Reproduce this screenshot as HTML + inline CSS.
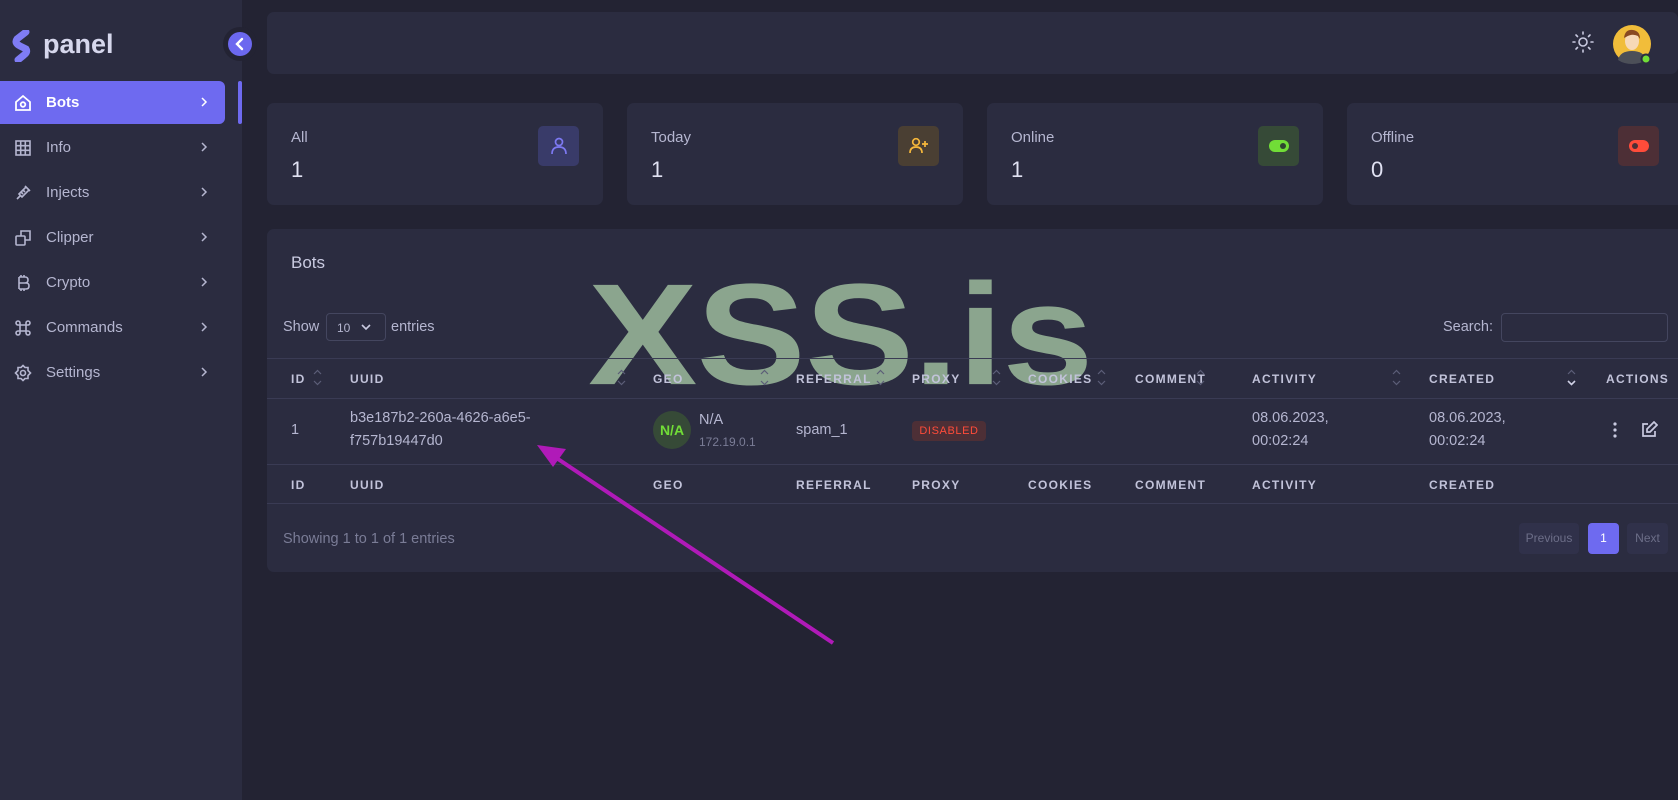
<!DOCTYPE html>
<html><head><meta charset="utf-8"><style>
*{box-sizing:border-box;margin:0;padding:0}
body{width:1678px;height:800px;overflow:hidden;background:#232333;font-family:"Liberation Sans",sans-serif;color:#cfd0e6;position:relative}
.abs{position:absolute}
.side{left:0;top:0;width:242px;height:800px;background:#2b2c40}
.logo{left:43px;top:29px;font-size:27px;font-weight:bold;color:#d6d7ec}
.tog{left:228px;top:32px;width:24px;height:24px;border-radius:50%;background:#6c68ef;box-shadow:0 0 0 5px #232333}
.menu{left:0;width:225px;height:43px;display:flex;align-items:center;font-size:15px;color:#b5b6d0}
.menu svg{margin-left:14px;margin-right:14px}
.menu .ch{position:absolute;right:0;top:14px}
.active{background:#6e6af0;color:#fff;border-radius:0 6px 6px 0}
.card{background:#2b2c40;border-radius:7px}
.lab{font-size:15px;color:#b5b6d0}
.num{font-size:22px;color:#e0e1f2}
.ib{width:41px;height:40px;border-radius:5px;display:flex;align-items:center;justify-content:center}
.th{font-size:12px;letter-spacing:1.3px;font-weight:bold;color:#c2c3da;position:absolute}
.td{font-size:14.5px;color:#b5b6d0;position:absolute;line-height:23px}
.line{position:absolute;left:267px;width:1411px;height:1px;background:#3a3b54}
.srt{position:absolute}
</style></head><body>
<div class="abs side"></div>
<svg class="abs" style="left:12px;top:30px" width="22" height="32" viewBox="0 0 22 32"><path d="M14 2 L5 9 Q2 13 8 16 L14 19 Q16 22 12 25 L6 30" stroke="#7f7cf5" stroke-width="7" fill="none" stroke-linecap="round"/></svg>
<div class="abs logo">panel</div>
<div class="abs tog"><svg width="24" height="24"><path d="M14 7 L9 12 L14 17" stroke="#fff" stroke-width="2.4" fill="none" stroke-linecap="round"/></svg></div>
<div class="abs" style="left:238px;top:81px;width:4px;height:43px;background:#6e6af0;border-radius:2px"></div>

<div class="abs menu active" style="top:81px"><svg width="18" height="18" viewBox="0 0 18 18" fill="none" stroke="#fff" stroke-width="1.8"><path d="M2 8 L9 2 L16 8 V16 H2 Z"/><circle cx="9" cy="10.5" r="2.3"/></svg><b>Bots</b><svg class="ch" width="14" height="14"><path d="M5 3 L9 7 L5 11" stroke="#fff" stroke-width="1.5" fill="none"/></svg></div>
<div class="abs menu" style="top:126px"><svg width="18" height="18" fill="none" stroke="#b5b6d0" stroke-width="1.6"><rect x="2" y="2" width="14" height="14"/><path d="M2 6.7H16M2 11.3H16M6.7 2V16M11.3 2V16"/></svg>Info<svg class="ch" width="14" height="14"><path d="M5 3 L9 7 L5 11" stroke="#b5b6d0" stroke-width="1.5" fill="none"/></svg></div>
<div class="abs menu" style="top:171px"><svg width="18" height="18" fill="none" stroke="#b5b6d0" stroke-width="1.6"><path d="M3 15 L6 12 M5 10 L12 3 L15 6 L8 13 Z M11 2 L16 7 M7 8 L9 10 M9 6 L11 8"/></svg>Injects<svg class="ch" width="14" height="14"><path d="M5 3 L9 7 L5 11" stroke="#b5b6d0" stroke-width="1.5" fill="none"/></svg></div>
<div class="abs menu" style="top:216px"><svg width="18" height="18" fill="none" stroke="#b5b6d0" stroke-width="1.6"><rect x="2" y="7" width="9" height="9" rx="1"/><path d="M7 7 V2 H16 V11 H11"/></svg>Clipper<svg class="ch" width="14" height="14"><path d="M5 3 L9 7 L5 11" stroke="#b5b6d0" stroke-width="1.5" fill="none"/></svg></div>
<div class="abs menu" style="top:261px"><svg width="18" height="18" fill="none" stroke="#b5b6d0" stroke-width="1.6"><path d="M5 3 H11 Q14 3 14 6 Q14 9 11 9 H5 M5 9 H12 Q15 9 15 12 Q15 15 12 15 H5 M5 3 V15 M7 1 V3 M10 1 V3 M7 15 V17 M10 15 V17"/></svg>Crypto<svg class="ch" width="14" height="14"><path d="M5 3 L9 7 L5 11" stroke="#b5b6d0" stroke-width="1.5" fill="none"/></svg></div>
<div class="abs menu" style="top:306px"><svg width="18" height="18" fill="none" stroke="#b5b6d0" stroke-width="1.6"><path d="M6 6 H12 V12 H6 Z M6 6 V4 A2 2 0 1 0 4 6 Z M12 6 V4 A2 2 0 1 1 14 6 Z M6 12 V14 A2 2 0 1 1 4 12 Z M12 12 V14 A2 2 0 1 0 14 12 Z"/></svg>Commands<svg class="ch" width="14" height="14"><path d="M5 3 L9 7 L5 11" stroke="#b5b6d0" stroke-width="1.5" fill="none"/></svg></div>
<div class="abs menu" style="top:351px"><svg width="18" height="18" fill="none" stroke="#b5b6d0" stroke-width="1.6"><path d="M9 1.5 L11 3.5 L14 3.5 L14 6.5 L16.5 9 L14 11.5 L14 14.5 L11 14.5 L9 16.5 L7 14.5 L4 14.5 L4 11.5 L1.5 9 L4 6.5 L4 3.5 L7 3.5 Z"/><circle cx="9" cy="9" r="2.5"/></svg>Settings<svg class="ch" width="14" height="14"><path d="M5 3 L9 7 L5 11" stroke="#b5b6d0" stroke-width="1.5" fill="none"/></svg></div>

<div class="abs card" style="left:267px;top:12px;width:1411px;height:62px"></div>
<svg class="abs" style="left:1572px;top:31px" width="22" height="22" fill="none" stroke="#c9cae0" stroke-width="1.6"><circle cx="11" cy="11" r="4"/><path d="M11 1V3M11 19V21M1 11H3M19 11H21M4 4L5.5 5.5M16.5 16.5L18 18M4 18L5.5 16.5M16.5 5.5L18 4" stroke-linecap="round"/></svg>
<svg class="abs" style="left:1612px;top:24px" width="42" height="42"><circle cx="20" cy="20" r="19" fill="#f1bd3a"/><path d="M6 36 Q8 27 20 27 Q32 27 34 36 Q28 40 20 40 Q12 40 6 36Z" fill="#4c4f58"/><ellipse cx="20" cy="17" rx="7" ry="9" fill="#f7d9b8"/><path d="M12 14 Q13 5 21 6 Q28 7 28 15 L26 12 Q20 9 14 13Z" fill="#8a4a22"/><circle cx="34" cy="35" r="4.5" fill="#71dd37" stroke="#2b2c40" stroke-width="2"/></svg>

<div class="abs card" style="left:267px;top:103px;width:336px;height:102px"></div>
<div class="abs card" style="left:627px;top:103px;width:336px;height:102px"></div>
<div class="abs card" style="left:987px;top:103px;width:336px;height:102px"></div>
<div class="abs card" style="left:1347px;top:103px;width:340px;height:102px"></div>
<div class="abs lab" style="left:291px;top:129px">All</div><div class="abs num" style="left:291px;top:157px">1</div>
<div class="abs lab" style="left:651px;top:129px">Today</div><div class="abs num" style="left:651px;top:157px">1</div>
<div class="abs lab" style="left:1011px;top:129px">Online</div><div class="abs num" style="left:1011px;top:157px">1</div>
<div class="abs lab" style="left:1371px;top:129px">Offline</div><div class="abs num" style="left:1371px;top:157px">0</div>
<div class="abs ib" style="left:538px;top:126px;background:#393b69"><svg width="20" height="20" fill="none" stroke="#7d79f2" stroke-width="1.7"><circle cx="10" cy="6" r="3.5"/><path d="M3 18 Q3 11 10 11 Q17 11 17 18"/></svg></div>
<div class="abs ib" style="left:898px;top:126px;background:#4a3f33"><svg width="22" height="20" fill="none" stroke="#f5b73b" stroke-width="1.7"><circle cx="8" cy="6" r="3.3"/><path d="M2 17 Q2 11 8 11 Q14 11 14 17 M17 5V11M14 8H20"/></svg></div>
<div class="abs ib" style="left:1258px;top:126px;background:#364a37"><svg width="22" height="14"><rect x="1" y="1" width="20" height="12" rx="6" fill="#71dd37"/><circle cx="15" cy="7" r="3" fill="#2e4530"/></svg></div>
<div class="abs ib" style="left:1618px;top:126px;background:#4d2f36"><svg width="22" height="14"><rect x="1" y="1" width="20" height="12" rx="6" fill="#ff4c3a"/><circle cx="7" cy="7" r="3" fill="#4d2f36"/></svg></div>

<div class="abs card" style="left:267px;top:229px;width:1420px;height:343px"></div>
<div class="abs" style="left:291px;top:253px;font-size:17px;color:#c9cae0">Bots</div>

<div class="abs" style="left:588px;top:243px;font-size:164px;font-weight:bold;color:#8ba58e;letter-spacing:-1px;line-height:1;transform:scaleY(0.88);transform-origin:50% 100%">XSS.is</div>

<div class="abs td" style="left:283px;top:316px">Show</div>
<div class="abs" style="left:326px;top:313px;width:60px;height:28px;border:1px solid #44465f;border-radius:4px;font-size:12px;color:#b5b6d0;padding:7px 10px">10 <svg width="12" height="10" style="margin-left:6px"><path d="M2 3 L6 7 L10 3" stroke="#c9cae0" stroke-width="1.6" fill="none"/></svg></div>
<div class="abs td" style="left:391px;top:316px">entries</div>
<div class="abs td" style="left:1443px;top:316px">Search:</div>
<div class="abs" style="left:1501px;top:313px;width:167px;height:29px;border:1px solid #44465f;border-radius:4px"></div>

<div class="line" style="top:358px"></div>
<div class="line" style="top:398px"></div>
<div class="line" style="top:464px"></div>
<div class="line" style="top:503px"></div>
<svg width="0" height="0" style="position:absolute"><defs><g id="s"><path d="M2 6 L5.5 2.5 L9 6 M2 13 L5.5 16.5 L9 13" stroke="#5c5e78" stroke-width="1.2" fill="none"/></g></defs></svg>
<div class="th" style="left:291px;top:372px">ID</div><svg class="srt" style="left:312px;top:368px" width="11" height="19"><use href="#s"/></svg>
<div class="th" style="left:350px;top:372px">UUID</div><svg class="srt" style="left:616px;top:368px" width="11" height="19"><use href="#s"/></svg>
<div class="th" style="left:653px;top:372px">GEO</div><svg class="srt" style="left:759px;top:368px" width="11" height="19"><use href="#s"/></svg>
<div class="th" style="left:796px;top:372px">REFERRAL</div><svg class="srt" style="left:875px;top:368px" width="11" height="19"><use href="#s"/></svg>
<div class="th" style="left:912px;top:372px">PROXY</div><svg class="srt" style="left:991px;top:368px" width="11" height="19"><use href="#s"/></svg>
<div class="th" style="left:1028px;top:372px">COOKIES</div><svg class="srt" style="left:1096px;top:368px" width="11" height="19"><use href="#s"/></svg>
<div class="th" style="left:1135px;top:372px">COMMENT</div><svg class="srt" style="left:1195px;top:368px" width="11" height="19"><use href="#s"/></svg>
<div class="th" style="left:1252px;top:372px">ACTIVITY</div><svg class="srt" style="left:1391px;top:368px" width="11" height="19"><use href="#s"/></svg>
<div class="th" style="left:1429px;top:372px">CREATED</div><svg class="srt" style="left:1566px;top:368px" width="11" height="19"><path d="M2 6 L5.5 2.5 L9 6" stroke="#5c5e78" stroke-width="1.2" fill="none"/><path d="M2 13 L5.5 16.5 L9 13" stroke="#d0d1e6" stroke-width="1.6" fill="none"/></svg>
<div class="th" style="left:1606px;top:372px">ACTIONS</div>

<div class="td" style="left:291px;top:419px">1</div>
<div class="td" style="left:350px;top:407px">b3e187b2-260a-4626-a6e5-<br>f757b19447d0</div>
<div class="abs" style="left:653px;top:411px;width:38px;height:38px;border-radius:50%;background:#364a37;color:#71dd37;font-size:14px;font-weight:bold;text-align:center;line-height:38px">N/A</div>
<div class="td" style="left:699px;top:409px">N/A</div>
<div class="abs" style="left:699px;top:435px;font-size:12px;color:#7a7c96">172.19.0.1</div>
<div class="td" style="left:796px;top:419px">spam_1</div>
<div class="abs" style="left:912px;top:421px;width:74px;height:20px;border-radius:4px;background:#4d2f36;color:#ff4c3a;font-size:11px;letter-spacing:.6px;text-align:center;line-height:20px">DISABLED</div>
<div class="td" style="left:1252px;top:407px">08.06.2023,<br>00:02:24</div>
<div class="td" style="left:1429px;top:407px">08.06.2023,<br>00:02:24</div>
<svg class="abs" style="left:1612px;top:421px" width="6" height="18"><circle cx="3" cy="3" r="1.6" fill="#c9cae0"/><circle cx="3" cy="9" r="1.6" fill="#c9cae0"/><circle cx="3" cy="15" r="1.6" fill="#c9cae0"/></svg>
<svg class="abs" style="left:1640px;top:421px" width="18" height="18" fill="none" stroke="#c9cae0" stroke-width="1.7"><path d="M8 3H3V15H15V10M7 11V8L14 1L17 4L10 11Z"/></svg>

<div class="th" style="left:291px;top:478px">ID</div>
<div class="th" style="left:350px;top:478px">UUID</div>
<div class="th" style="left:653px;top:478px">GEO</div>
<div class="th" style="left:796px;top:478px">REFERRAL</div>
<div class="th" style="left:912px;top:478px">PROXY</div>
<div class="th" style="left:1028px;top:478px">COOKIES</div>
<div class="th" style="left:1135px;top:478px">COMMENT</div>
<div class="th" style="left:1252px;top:478px">ACTIVITY</div>
<div class="th" style="left:1429px;top:478px">CREATED</div>

<div class="abs" style="left:283px;top:531px;font-size:14.5px;color:#7a7c96">Showing 1 to 1 of 1 entries</div>
<div class="abs" style="left:1519px;top:523px;width:60px;height:31px;background:#30314a;border-radius:4px;font-size:12px;color:#6c6e88;text-align:center;line-height:31px">Previous</div>
<div class="abs" style="left:1588px;top:523px;width:31px;height:31px;background:#6e6af0;border-radius:4px;font-size:12px;color:#fff;text-align:center;line-height:31px">1</div>
<div class="abs" style="left:1627px;top:523px;width:41px;height:31px;background:#30314a;border-radius:4px;font-size:12px;color:#6c6e88;text-align:center;line-height:31px">Next</div>

<svg class="abs" style="left:0;top:0" width="1678" height="800"><line x1="833" y1="643" x2="552" y2="455" stroke="#b01ab8" stroke-width="4"/><polygon points="537,445 566,449 553,467" fill="#b01ab8"/></svg>
</body></html>
